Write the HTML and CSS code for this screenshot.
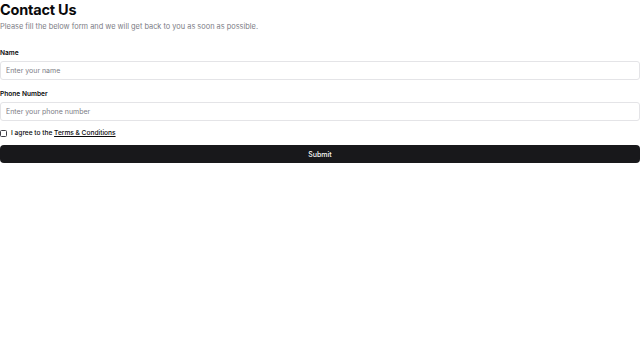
FILE: index.html
```html
<!DOCTYPE html>
<html lang="en">
<head>
<meta charset="utf-8">
<title>Contact Us</title>
<link rel="stylesheet" href="styles.css">
</head>
<body>
<main class="page">
  <h1 class="title">Contact Us</h1>
  <p class="subtitle">Please fill the below form and we will get back to you as soon as possible.</p>
  <form class="form">
    <div class="field">
      <label class="label" for="name">Name</label>
      <input class="input" id="name" type="text" placeholder="Enter your name">
    </div>
    <div class="field">
      <label class="label" for="phone">Phone Number</label>
      <input class="input" id="phone" type="text" placeholder="Enter your phone number">
    </div>
    <div class="agree">
      <input class="check" id="terms" type="checkbox">
      <label class="agree-text" for="terms">I agree to the <a class="link" href="#">Terms &amp; Conditions</a></label>
    </div>
    <button class="submit" type="button">Submit</button>
  </form>
</main>
</body>
</html>
```

FILE: styles.css
```css
* { box-sizing: border-box; }
html, body { margin: 0; padding: 0; background: #fff; }
body { font-family: Inter, "Noto Sans", sans-serif; color: #09090b; }
.page { padding: 0; }
.title {
  margin: 0;
  font-size: 14.5px;
  line-height: 20px;
  font-weight: 700;
  letter-spacing: -0.2px;
}
.subtitle {
  margin: 1px 0 0;
  font-size: 7.4px;
  line-height: 12px;
  color: #7c7c85;
}
.form {
  margin-top: 15px;
  display: flex;
  flex-direction: column;
}
.field { display: flex; flex-direction: column; margin-bottom: 9px; }
.label {
  font-size: 6.6px;
  line-height: 10px;
  font-weight: 600;
  margin-bottom: 3px;
}
.input {
  width: 640px;
  height: 19px;
  margin: 0;
  border: 1px solid #e4e4e7;
  border-radius: 3px;
  padding: 0 5px;
  font-family: inherit;
  font-size: 7px;
  color: #09090b;
  background: #fff;
  outline: none;
}
.input::placeholder { color: #7c7c85; }
.agree {
  display: flex;
  align-items: center;
  gap: 4px;
  margin-top: -3px;
  height: 12px;
}
.check {
  margin: 0;
  width: 7px;
  height: 7px;
  appearance: none;
  border: 1px solid #3f3f46;
  border-radius: 1.5px;
  background: #fff;
}
.agree-text { font-size: 6.6px; line-height: 10px; font-weight: 500; }
.link { color: #09090b; text-decoration: underline; }
.submit {
  margin-top: 6px;
  width: 640px;
  height: 18px;
  border: none;
  border-radius: 4px;
  background: #18181b;
  color: #fafafa;
  font-family: inherit;
  font-size: 7px;
  font-weight: 500;
  padding: 0;
}
```
